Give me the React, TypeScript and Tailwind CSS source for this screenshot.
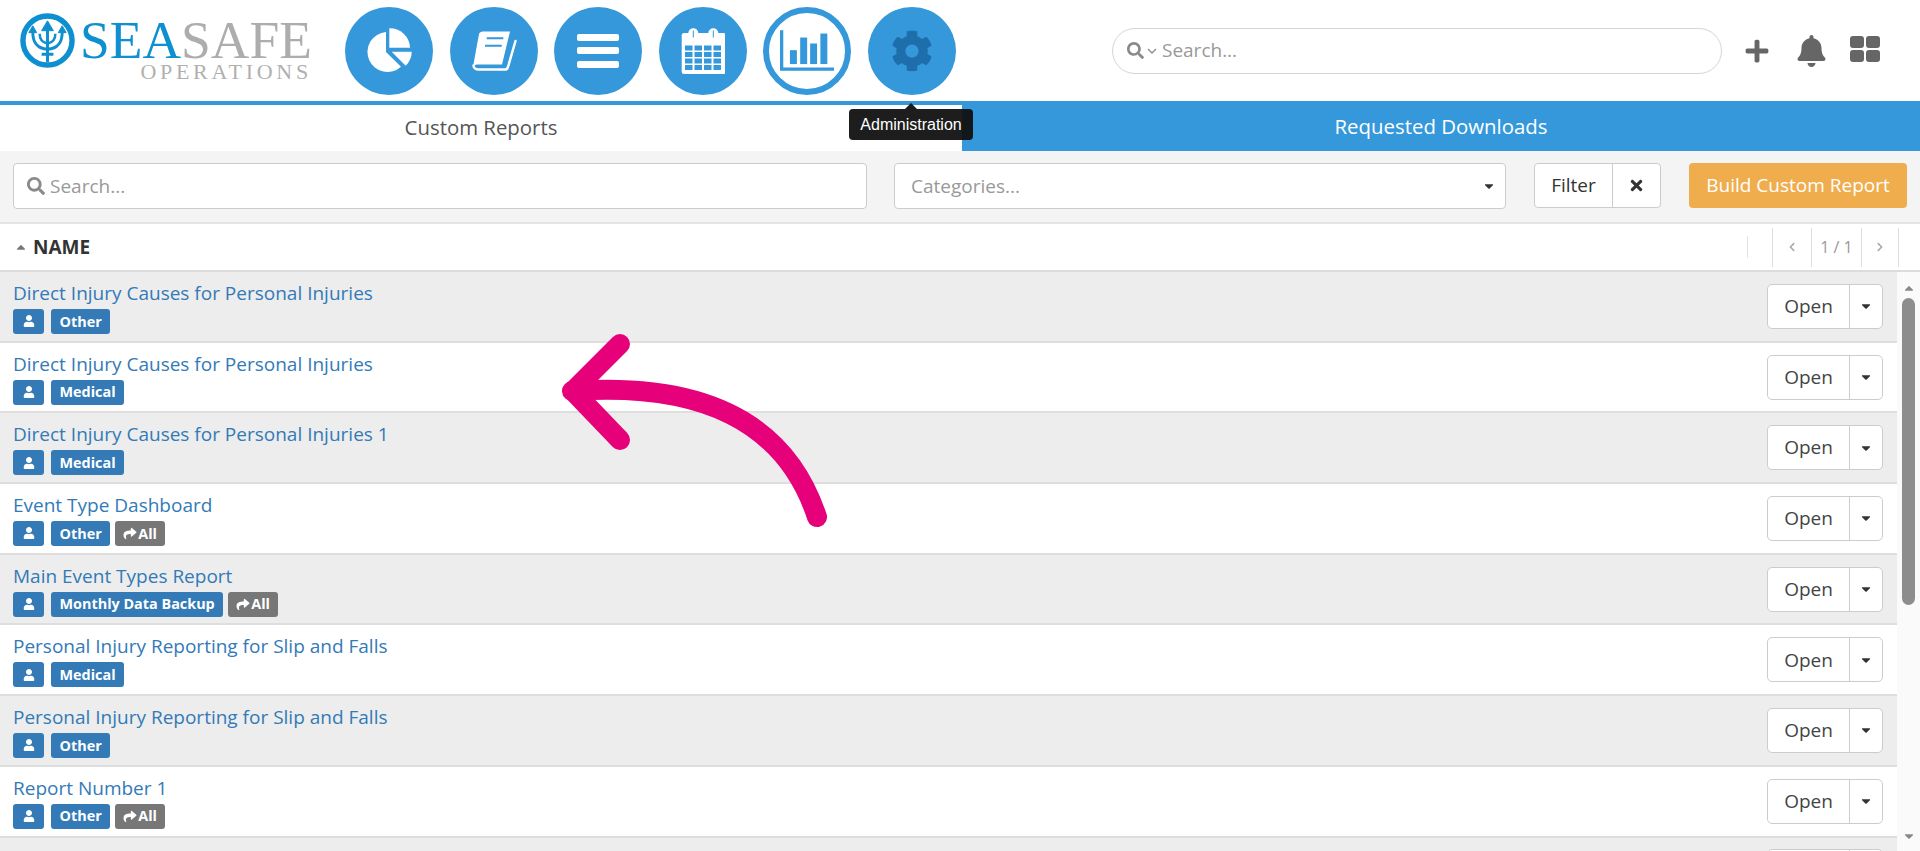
import { FaBell, FaCaretDown, FaCaretUp, FaChevronLeft, FaChevronRight, FaCog, FaPlus, FaSearch, FaShare, FaTimes, FaUser } from "react-icons/fa";

const reports = [
  { name: "Direct Injury Causes for Personal Injuries", tag: "Other" },
  { name: "Direct Injury Causes for Personal Injuries", tag: "Medical" },
  { name: "Direct Injury Causes for Personal Injuries 1", tag: "Medical" },
  { name: "Event Type Dashboard", tag: "Other", shared: true },
  { name: "Main Event Types Report", tag: "Monthly Data Backup", shared: true },
  { name: "Personal Injury Reporting for Slip and Falls", tag: "Medical" },
  { name: "Personal Injury Reporting for Slip and Falls", tag: "Other" },
  { name: "Report Number 1", tag: "Other", shared: true },
  // row cut off by the window, only the top of its button shows
  { name: "", tag: "" },
];

const Logo = () => (
  <div className="flex w-[345px] shrink-0 self-start pl-[20px] pt-[13px]">
    <svg viewBox="0 0 56 56" className="h-[55px] w-[55px] shrink-0" fill="none" stroke="#0e8fd0">
      <circle cx="28" cy="28" r="25" strokeWidth="5.500" />
      <path d="M28 14v36M22 42h12" strokeWidth="3" />
      <path d="M28 8l-6 10h12z" fill="#0e8fd0" strokeWidth="1" />
      <path d="M13 19c0 11 4 17 15 18c11-1 15-7 15-18" strokeWidth="3" />
      <path d="M20 21c0 6 3 9 8 10c5-1 8-4 8-10" strokeWidth="2.500" />
      <path d="M13 13l-4 7h8zM43 13l-4 7h8z" fill="#0e8fd0" strokeWidth="1" />
    </svg>
    <div className="ml-[5px] flex flex-col items-end font-['Liberation_Serif',serif] leading-none">
      <div className="mt-[2.500px] h-[48px] text-[53.500px] leading-[48px]">
        <span className="text-[#0e8fd0]">SEA</span>
        <span className="text-[#adadad]">SAFE</span>
      </div>
      <div className="-mt-[3px] text-[22px] leading-[22px] tracking-[3.700px] text-[#b0b0b0]">OPERATIONS</div>
    </div>
  </div>
);

const Circle = ({ active, children }: { active?: boolean; children: React.ReactNode }) => (
  <div
    className={
      active
        ? "flex h-[88px] w-[88px] items-center justify-center rounded-full border-[6px] border-[#3498db] bg-white text-[#3498db]"
        : "flex h-[88px] w-[88px] items-center justify-center rounded-full bg-[#3498db] text-white"
    }
  >
    {children}
  </div>
);

const calendarCells = [18.5, 25, 31.5, 38].flatMap((y) => [4, 13.5, 23, 32.5].map((x) => ({ x, y })));

const Header = () => (
  <header className="flex h-[101px] items-center bg-white">
    <Logo />
    <nav className="flex gap-[16.600px]">
      <Circle>
        <svg viewBox="0 0 48 48" className="h-[48px] w-[48px]" fill="currentColor">
          <path d="M21 5a20 20 0 1 0 15 34.700L21 25z" />
          <path d="M24.300 1.300a20 20 0 0 1 20.700 19.400H24.300z" />
          <path d="M26.700 24.700H46.700a20 20 0 0 1-6 14z" />
        </svg>
      </Circle>
      <Circle>
        <svg viewBox="0 0 50 48" className="h-[48px] w-[50px]">
          <path fill="currentColor" d="M14 4.500H41l-8 33H9c-2 0-3.500.5-4 1.500c-.5-1-.5-2-.2-3.500L10 7c.5-1.500 2-2.500 4-2.500z" />
          <path fill="none" stroke="currentColor" strokeWidth="2.500" strokeLinecap="round" d="M46.500 14L39 40c-.5 1.500-1.500 2.500-3 2.500H9.500c-3 0-5-2-5-4" />
          <path fill="none" stroke="#3498db" strokeWidth="2" d="M17.700 11.300H34.300M16 18.700H32.700" />
        </svg>
      </Circle>
      <Circle>
        <div className="flex w-[42px] flex-col gap-[6.500px]">
          <div className="h-[7px] rounded-[2px] bg-white" />
          <div className="h-[7px] rounded-[2px] bg-white" />
          <div className="h-[7px] rounded-[2px] bg-white" />
        </div>
      </Circle>
      <Circle>
        <svg viewBox="0 0 44 48" className="h-[48px] w-[44px]">
          <rect x="0.700" y="6" width="44" height="41" rx="2.500" fill="currentColor" />
          <rect x="7.300" y="1.300" width="10" height="12" rx="5" fill="currentColor" />
          <rect x="27.300" y="1.300" width="10" height="12" rx="5" fill="currentColor" />
          <rect x="11.800" y="3.500" width="1" height="7" fill="#3498db" />
          <rect x="31.800" y="3.500" width="1" height="7" fill="#3498db" />
          {calendarCells.map((c, i) => (
            <rect key={i} x={c.x} y={c.y} width="7.500" height="5" fill="#3498db" />
          ))}
        </svg>
      </Circle>
      <Circle active>
        <svg viewBox="0 0 54.300 40.700" className="h-[41px] w-[54px]" fill="currentColor">
          <path d="M0 0h3.300v37.400h51v3.300H0z" />
          <rect x="10" y="20" width="7" height="14" />
          <rect x="20.300" y="7.300" width="7" height="26.700" />
          <rect x="30.300" y="13.300" width="7" height="20.700" />
          <rect x="40.600" y="3.300" width="7" height="30.700" />
        </svg>
      </Circle>
      <Circle>
        <FaCog className="h-[42px] w-[42px] text-[#1f6eac]" />
      </Circle>
    </nav>
    <div className="ml-[156px] flex h-[46px] w-[610px] items-center rounded-full border border-[#d5d5d5] pl-[14px] text-[19px] text-[#999]">
      <FaSearch className="h-[17px] w-[17px] text-[#8a8a8a]" />
      <svg viewBox="0 0 10 6" className="ml-[3px] h-[6px] w-[10px]" fill="none" stroke="#8a8a8a" strokeWidth="1.300">
        <path d="M1 1l4 4l4-4" />
      </svg>
      <span className="ml-[5px]">Search...</span>
    </div>
    <div className="ml-[22px] flex items-center text-[#666]">
      <FaPlus className="h-[26px] w-[26px]" />
      <FaBell className="ml-[26px] h-[32px] w-[31px]" />
      <div className="ml-[23px] -mt-[3px] grid grid-cols-2 gap-[2px]">
        <div className="h-[12px] w-[14px] rounded-[3px] bg-[#666]" />
        <div className="h-[12px] w-[14px] rounded-[3px] bg-[#666]" />
        <div className="h-[12px] w-[14px] rounded-[3px] bg-[#666]" />
        <div className="h-[12px] w-[14px] rounded-[3px] bg-[#666]" />
      </div>
    </div>
  </header>
);

const Tabs = () => (
  <div className="flex h-[50px] text-[20.400px]">
    <div className="flex w-[962px] items-center justify-center border-t-4 border-[#3498db] bg-white pb-[2px] text-[#555]">
      Custom Reports
    </div>
    <div className="flex flex-1 items-center justify-center bg-[#3498db] text-white">Requested Downloads</div>
  </div>
);

const Toolbar = () => (
  <div className="flex h-[73px] items-start border-b-2 border-[#e4e4e4] bg-[#f4f4f4] px-[13px] pt-[12px] text-[19px]">
    <div className="flex h-[46px] w-[854px] items-center rounded-[4px] border border-[#ccc] bg-white pl-[13px] text-[#999]">
      <FaSearch className="h-[18px] w-[18px] text-[#8a8a8a]" />
      <span className="ml-[5px]">Search...</span>
    </div>
    <div className="ml-[27px] flex h-[46px] w-[612px] items-center justify-between rounded-[4px] border border-[#ccc] bg-white pl-[16px] pr-[9px] text-[#999]">
      Categories...
      <FaCaretDown className="h-[14px] w-[14px] text-[#333]" />
    </div>
    <div className="ml-[28px] flex h-[45px] w-[127px] items-stretch rounded-[4px] border border-[#ccc] bg-white text-[#333]">
      <div className="flex w-[78px] items-center justify-center border-r border-[#ccc]">Filter</div>
      <div className="flex flex-1 items-center justify-center">
        <FaTimes className="h-[17px] w-[17px]" />
      </div>
    </div>
    <div className="ml-[28px] flex h-[45px] w-[218px] items-center justify-center rounded-[4px] bg-[#f0ad4e] text-white">
      Build Custom Report
    </div>
  </div>
);

const TableHead = () => (
  <div className="flex h-[48px] items-center border-b-2 border-[#dcdcdc] bg-white pl-[14px]">
    <FaCaretUp className="h-[14px] w-[14px] text-[#777]" />
    <span className="ml-[5px] text-[19px] font-bold text-[#333]">NAME</span>
    <div className="ml-auto flex h-[39px] items-center text-[#aaa]">
      <div className="h-[22px] w-[25px] border-l border-[#e4e4e4]" />
      <div className="flex h-full w-[39px] items-center justify-center border-l border-[#ddd]">
        <FaChevronLeft className="h-[10px] w-[10px]" />
      </div>
      <div className="flex h-full w-[50px] items-center justify-center border-l border-[#ddd] text-[16px] text-[#999]">1 / 1</div>
      <div className="flex h-full w-[38px] items-center justify-center border-x border-[#ddd]">
        <FaChevronRight className="h-[10px] w-[10px]" />
      </div>
      <div className="w-[21px]" />
    </div>
  </div>
);

const Badge = ({ grey, children }: { grey?: boolean; children: React.ReactNode }) => (
  <span
    className={
      grey
        ? "-ml-[2px] flex h-[25px] items-center rounded-[3px] bg-[#777] px-[8px] text-[14.400px] font-bold text-white"
        : "flex h-[25px] items-center rounded-[3px] bg-[#337ab7] px-[8.500px] text-[14.400px] font-bold text-white"
    }
  >
    {children}
  </span>
);

const Row = ({ name, tag, shared, odd }: { name: string; tag: string; shared?: boolean; odd: boolean }) => (
  <div
    className={
      odd
        ? "flex h-[70.700px] shrink-0 items-center justify-between border-b-2 border-[#dedede] bg-[#ededed] pl-[13px] pr-[14px]"
        : "flex h-[70.700px] shrink-0 items-center justify-between border-b-2 border-[#dedede] bg-white pl-[13px] pr-[14px]"
    }
  >
    {name ? (
      <div className="mt-[2px]">
        <a className="block text-[19px] leading-[25px] text-[#337ab7]">{name}</a>
        <div className="mt-[3px] flex gap-[7px]">
          <span className="flex h-[25px] w-[31px] items-center justify-center rounded-[3px] bg-[#337ab7] text-white">
            <FaUser className="h-[12px] w-[12px]" />
          </span>
          <Badge>{tag}</Badge>
          {shared && (
            <Badge grey>
              <FaShare className="mr-[1px] h-[13px] w-[14px]" />
              All
            </Badge>
          )}
        </div>
      </div>
    ) : (
      <div />
    )}
    <div className="flex h-[45px] w-[116px] items-stretch rounded-[5px] border border-[#ccc] bg-white text-[19px] text-[#444]">
      <div className="flex w-[82px] items-center justify-center border-r border-[#ccc]">{name && "Open"}</div>
      <div className="flex flex-1 items-center justify-center">
        <FaCaretDown className="h-[14px] w-[14px] text-[#333]" />
      </div>
    </div>
  </div>
);

const Scrollbar = () => (
  <div className="flex w-[23px] shrink-0 flex-col items-center bg-[#fafafa] pt-[9px]">
    <FaCaretUp className="h-[14px] w-[14px] text-[#888]" />
    <div className="mt-[3px] h-[307px] w-[13px] rounded-full bg-[#8d8d8d]" />
    <FaCaretDown className="mt-[224px] h-[14px] w-[14px] text-[#888]" />
  </div>
);

// Pink annotation drawn over the screenshot
const AnnotationArrow = () => (
  <svg className="absolute left-[550px] top-[330px] h-[210px] w-[290px]" viewBox="550 330 290 210" fill="none" stroke="#e6007a" strokeWidth="20" strokeLinecap="round" strokeLinejoin="round">
    <path d="M817 517C785 420 700 382 572 391" />
    <path d="M620 344L573 391L620 440" />
  </svg>
);

const Tooltip = () => (
  <div className="absolute left-[849px] top-[103px] flex flex-col items-center opacity-95">
    <div className="h-0 w-0 border-x-[6px] border-b-[6px] border-x-transparent border-b-[#111]" />
    <div className="flex h-[31px] w-[124px] items-center justify-center rounded-[4px] bg-[#111] font-['Liberation_Sans',sans-serif] text-[16px] text-white">
      Administration
    </div>
  </div>
);

export default function App() {
  return (
    <div className="relative flex h-[851px] flex-col overflow-hidden bg-white font-['Open_Sans',sans-serif]">
      <Header />
      <Tabs />
      <Toolbar />
      <TableHead />
      <div className="flex min-h-0 flex-1">
        <div className="flex min-w-0 flex-1 flex-col overflow-hidden">
          {reports.map((r, i) => (
            <Row key={i} name={r.name} tag={r.tag} shared={r.shared} odd={i % 2 === 0} />
          ))}
        </div>
        <Scrollbar />
      </div>
      <Tooltip />
      <AnnotationArrow />
    </div>
  );
}
